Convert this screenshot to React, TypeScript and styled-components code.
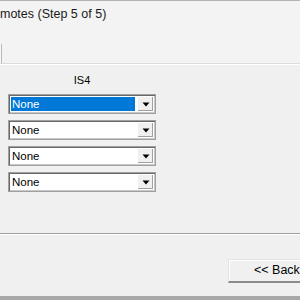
import styled, { createGlobalStyle } from "styled-components";

const GlobalStyle = createGlobalStyle`
  html, body {
    margin: 0;
    padding: 0;
    background: #f0f0f0;
    overflow: hidden;
  }
  * { box-sizing: border-box; }
`;

const Window = styled.div`
  width: 300px;
  height: 300px;
  display: flex;
  flex-direction: column;
  background: #f0f0f0;
  font-family: "Liberation Sans", "DejaVu Sans", sans-serif;
  overflow: hidden;
`;

const Header = styled.div`
  height: 64px;
  display: flex;
  flex-direction: column;
  background: #f3f3f3;
  border-top: 1px solid #b4b4b4;
  border-bottom: 1px solid #dcdcdc;
  box-shadow: 0 1px 0 #ffffff;
`;

const Title = styled.div`
  height: 43px;
  padding: 6px 0 0 0;
  font-size: 12.5px;
  color: #1a1a1a;
  white-space: nowrap;
`;

const TabStrip = styled.div`
  flex: 1;
  display: flex;
`;

const TabEdge = styled.div`
  width: 2px;
  height: 100%;
  border-right: 1px solid #b8b8b8;
  background: #f8f8f8;
`;

const Body = styled.div`
  height: 170px;
  padding: 10px 0 0 8px;
  display: flex;
  flex-direction: column;
  border-bottom: 1px solid #a0a0a0;
  box-shadow: 0 1px 0 #ffffff;
`;

const Column = styled.div`
  width: 148px;
  display: flex;
  flex-direction: column;
  gap: 6px;
`;

const ColumnLabel = styled.div`
  text-align: center;
  font-size: 11px;
  color: #000;
  height: 12px;
  line-height: 12px;
  margin-bottom: 2px;
`;

const Combo = styled.div`
  height: 20px;
  display: flex;
  background: #fff;
  border: 1px solid #a0a0a0;
  box-shadow: inset 1px 1px 0 #696969, inset -1px -1px 0 #c8c8c8;
  padding: 2px;
`;

const ComboText = styled.div<{ $selected?: boolean }>`
  flex: 1;
  margin-right: 2px;
  padding-left: 1px;
  font-size: 11.5px;
  line-height: 14px;
  color: ${({ $selected }) => ($selected ? "#ffffff" : "#000000")};
  background: ${({ $selected }) => ($selected ? "#0078d7" : "transparent")};
`;

const DropButton = styled.div`
  width: 16px;
  display: flex;
  align-items: center;
  justify-content: center;
  background: #f0f0f0;
  border-left: 1px solid #ffffff;
  box-shadow: inset -1px -1px 0 #a0a0a0;
`;

const Footer = styled.div`
  flex: 1;
  display: flex;
  flex-direction: column;
`;

const ButtonRow = styled.div`
  height: 60px;
  display: flex;
  justify-content: flex-end;
  padding-top: 25px;
`;

const NavButton = styled.div`
  width: 80px;
  height: 24px;
  margin-right: -8px;
  padding-left: 25px;
  font-size: 12.5px;
  line-height: 21px;
  color: #000;
  background: #f0f0f0;
  border-top: 1px solid #e3e3e3;
  border-left: 1px solid #e3e3e3;
  border-bottom: 2px solid #8a8a8a;
  box-shadow: inset 1px 1px 0 #ffffff;
`;

const BottomEdge = styled.div`
  height: 4px;
  margin-top: auto;
  background: #a8a8a8;
`;

function Arrow() {
  return (
    <svg width="8" height="5" viewBox="0 0 8 5">
      <path d="M0.5 0.5 H7.5 L4 4.5 Z" fill="#000" />
    </svg>
  );
}

const rows = [true, false, false, false];

export default function App() {
  return (
    <Window>
      <GlobalStyle />
      <Header>
        <Title>motes (Step 5 of 5)</Title>
        <TabStrip>
          <TabEdge />
        </TabStrip>
      </Header>
      <Body>
        <Column>
          <ColumnLabel>IS4</ColumnLabel>
          {rows.map((selected, i) => (
            <Combo key={i}>
              <ComboText $selected={selected}>None</ComboText>
              <DropButton>
                <Arrow />
              </DropButton>
            </Combo>
          ))}
        </Column>
      </Body>
      <Footer>
        <ButtonRow>
          <NavButton>&lt;&lt; Back</NavButton>
        </ButtonRow>
        <BottomEdge />
      </Footer>
    </Window>
  );
}
